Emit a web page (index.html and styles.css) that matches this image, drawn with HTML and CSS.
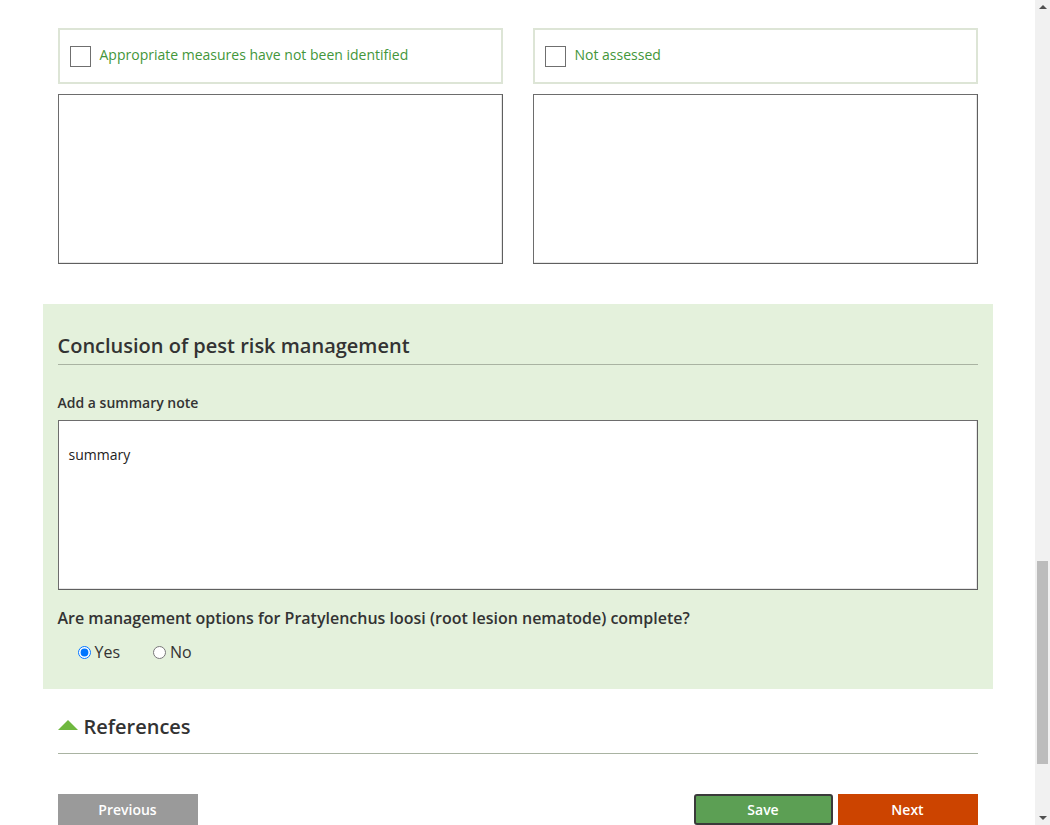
FILE: index.html
```html
<!DOCTYPE html>
<html lang="en">
<head>
<meta charset="utf-8">
<title>Pest risk management</title>
<link rel="stylesheet" href="styles.css">
</head>
<body>
<main class="page">
  <div class="earlier"></div>

  <section class="options" id="options">
    <div class="opt-col">
      <label class="check-box"><span class="check"></span><span class="check-text">Appropriate measures have not been identified</span></label>
      <textarea class="opt-note"></textarea>
    </div>
    <div class="opt-col">
      <label class="check-box"><span class="check"></span><span class="check-text">Not assessed</span></label>
      <textarea class="opt-note"></textarea>
    </div>
  </section>

  <section class="conclusion">
    <h2 class="section-title">Conclusion of pest risk management</h2>
    <div class="field-label">Add a summary note</div>
    <textarea class="summary">summary</textarea>
    <div class="question">Are management options for Pratylenchus loosi (root lesion nematode) complete?</div>
    <div class="radios">
      <label class="radio"><input type="radio" name="complete" checked> Yes</label>
      <label class="radio"><input type="radio" name="complete"> No</label>
    </div>
  </section>

  <section class="references">
    <h2 class="ref-title"><span class="tri"></span>References</h2>
  </section>

  <nav class="actions">
    <button class="btn btn-prev">Previous</button>
    <div class="actions-right">
      <button class="btn btn-save">Save</button>
      <button class="btn btn-next">Next</button>
    </div>
  </nav>
  <div class="after"></div>
</main>
<div class="scrollbar" aria-hidden="true">
  <span class="sb-up"></span>
  <span class="sb-thumb"></span>
  <span class="sb-down"></span>
</div>
<script src="script.js"></script>
</body>
</html>
```

FILE: styles.css
```css
html, body {
  margin: 0;
  padding: 0;
  background: #fff;
}
body {
  font-family: "Open Sans", "Liberation Sans", sans-serif;
  font-size: 14px;
  color: #333;
  padding-right: 15px;
}
.page {
  width: 950px;
  margin: 0 auto;
}
.earlier {
  height: 2230px;
}
.options {
  display: flex;
  gap: 30px;
  padding: 0 15px;
}
.opt-col {
  flex: 1;
  display: flex;
  flex-direction: column;
  gap: 10px;
}
.check-box {
  display: flex;
  align-items: center;
  gap: 9px;
  height: 56px;
  box-sizing: border-box;
  border: 2px solid #dde5d6;
  padding: 0 10px;
  color: #43963a;
  font-size: 14px;
}
.check-text {
  position: relative;
  top: -2px;
}
.check {
  width: 21px;
  height: 21px;
  box-sizing: border-box;
  border: 1px solid #6f6f6f;
  background: #fff;
}
.opt-note, .summary {
  display: block;
  box-sizing: border-box;
  height: 170px;
  border: 1px solid #6d6d6d;
  border-right-color: #5f5f5f;
  border-bottom-color: #5f5f5f;
  box-shadow: inset -1px -1px 0 #e6e6e6;
  resize: none;
  font-family: "Open Sans", "Liberation Sans", sans-serif;
  font-size: 14px;
  color: #222;
  padding: 24px 10px 10px;
  margin: 0;
  outline: none;
}
.conclusion {
  margin-top: 40px;
  background: #e4f1dc;
  padding: 27px 15px 26px;
}
.section-title {
  margin: 0;
  font-size: 20px;
  font-weight: 600;
  line-height: 30px;
  color: #333;
  padding-bottom: 3px;
  border-bottom: 1px solid #a9b3a2;
}
.field-label {
  margin-top: 28px;
  font-weight: 600;
  font-size: 14px;
  line-height: 20px;
}
.summary {
  width: 100%;
  margin-top: 7px;
  padding-top: 24px;
}
.question {
  margin-top: 16px;
  font-size: 16px;
  font-weight: 600;
  line-height: 24px;
}
.radios {
  display: flex;
  gap: 33px;
  padding-left: 20px;
  margin-top: 11px;
  font-size: 16px;
  line-height: 22px;
}
.radio {
  display: flex;
  align-items: center;
  gap: 2px;
}
.radio input {
  margin: 0 2px 0 0;
  width: 13px;
  height: 13px;
}
.references {
  padding: 24px 15px 0;
}
.ref-title {
  margin: 0;
  display: flex;
  align-items: center;
  gap: 6px;
  font-size: 20px;
  font-weight: 600;
  line-height: 28px;
  padding-bottom: 12px;
  border-bottom: 1px solid #a9b3a2;
  color: #333;
}
.tri {
  width: 0;
  height: 0;
  border-left: 10px solid transparent;
  border-right: 10px solid transparent;
  border-bottom: 10px solid #6fb83f;
  margin-top: -4px;
}
.actions {
  display: flex;
  justify-content: space-between;
  padding: 40px 15px 0;
}
.actions-right {
  display: flex;
  gap: 5px;
}
.btn {
  width: 140px;
  height: 31px;
  border: 0;
  color: #fff;
  font-family: "Open Sans", "Liberation Sans", sans-serif;
  font-size: 14px;
  font-weight: 600;
  cursor: pointer;
  padding: 0;
}
.btn-prev {
  background: #9a9a9a;
}
.btn-save {
  background: #5c9f54;
  border: 2px solid #3a3a3a;
  border-radius: 3px;
  width: 139px;
}
.btn-next {
  background: #cc4400;
}
.after {
  height: 200px;
}
.scrollbar {
  position: fixed;
  top: 0;
  right: 0;
  width: 15px;
  height: 100%;
  background: #f1f1f1;
}
.sb-up, .sb-down {
  position: absolute;
  left: 4px;
  width: 0;
  height: 0;
  border-left: 4px solid transparent;
  border-right: 4px solid transparent;
}
.sb-up {
  top: 5px;
  border-bottom: 4px solid #505050;
}
.sb-down {
  bottom: 5px;
  border-top: 4px solid #505050;
}
.sb-thumb {
  position: absolute;
  left: 2px;
  right: 2px;
  top: 561px;
  height: 203px;
  background: #bcbcbc;
}
```

FILE: script.js
```js
window.addEventListener('DOMContentLoaded', function () {
  var el = document.getElementById('options');
  var top = el.getBoundingClientRect().top + window.scrollY - 28;
  window.scrollTo(0, top);
});
```
